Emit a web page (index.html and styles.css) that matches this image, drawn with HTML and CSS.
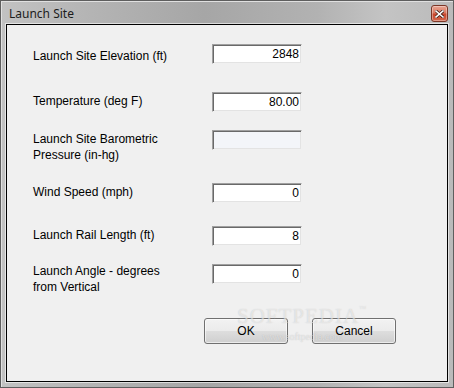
FILE: index.html
```html
<!DOCTYPE html>
<html lang="en">
<head>
    <meta charset="UTF-8">
    <title>Launch Site</title>
    <link rel="stylesheet" href="styles.css">
</head>
<body>
<div class="window">
    <div class="titlebar">
        <span class="title">Launch Site</span>
        <div class="close">
            <svg width="9" height="8" viewBox="0 0 9 8">
                <path d="M1 1 L8 7 M8 1 L1 7" stroke="#3a1a12" stroke-width="3" stroke-linecap="square"/>
                <path d="M1 1 L8 7 M8 1 L1 7" stroke="#fff" stroke-width="1.6" stroke-linecap="square"/>
            </svg>
        </div>
    </div>

    <div class="client">
        <div class="row row-1">
            <label class="label label-low">Launch Site Elevation (ft)</label>
            <input class="field" type="text" value="2848">
        </div>
        <div class="row row-2">
            <label class="label">Temperature (deg F)</label>
            <input class="field" type="text" value="80.00">
        </div>
        <div class="row row-3">
            <label class="label">Launch Site Barometric<br>Pressure (in-hg)</label>
            <input class="field" type="text" value="" disabled>
        </div>
        <div class="row row-4">
            <label class="label">Wind Speed (mph)</label>
            <input class="field" type="text" value="0">
        </div>
        <div class="row row-5">
            <label class="label">Launch Rail Length (ft)</label>
            <input class="field" type="text" value="8">
        </div>
        <div class="row row-6">
            <label class="label label-high">Launch Angle - degrees<br>from Vertical</label>
            <input class="field" type="text" value="0">
        </div>

        <div class="buttons">
            <button class="btn">OK</button>
            <button class="btn">Cancel</button>
        </div>

        <!-- watermark sitting over the buttons -->
        <div class="watermark">
            <div class="wm-big">SOFTPEDIA<sup>™</sup></div>
            <div class="wm-small">www.softpedia.com</div>
        </div>
    </div>
</div>
</body>
</html>
```

FILE: styles.css
```css
body {
    margin: 0;
    padding: 0;
    width: 454px;
    height: 388px;
    overflow: hidden;
    font-family: 'Liberation Sans', Arial, sans-serif;
}

.window {
    width: 454px;
    height: 388px;
    box-sizing: border-box;
    border: 1px solid #5e5e5e;
    padding: 0 5px 5px 5px;
    background: linear-gradient(to right, #c2c2c2 0%, #b4b4b4 20%, #a6a6a6 45%, #b2b2b2 70%, #c4c4c4 85%, #bababa 100%);
    box-shadow: inset 1px 1px 0 #e0e0e0;
    display: flex;
    flex-direction: column;
}

.titlebar {
    height: 23px;
    display: flex;
    justify-content: space-between;
    align-items: flex-start;
}

.title {
    font-family: 'Noto Sans', 'Open Sans', sans-serif;
    font-size: 12px;
    color: #1c1c1c;
    margin: 4px 0 0 3px;
}

.close {
    width: 17px;
    height: 17px;
    box-sizing: border-box;
    margin-top: 4px;
    margin-right: 0;
    border: 1px solid #7b3626;
    border-radius: 3px;
    background: linear-gradient(to bottom, #e9a593 0%, #d97a62 45%, #c8462b 55%, #d2674c 100%);
    box-shadow: inset 0 0 0 1px rgba(255, 255, 255, 0.35);
    display: flex;
    justify-content: center;
    align-items: center;
}

.client {
    position: relative;
    flex: 1;
    border: 1px solid #000;
    background-color: #f0f0f0;
    box-shadow: 0 0 0 1px rgba(255, 255, 255, 0.6);
    padding: 19px 0 0 26px;
}

.row {
    display: flex;
    align-items: flex-start;
}

.row-1 { height: 48px; }
.row-2 { height: 38px; }
.row-3 { height: 53px; }
.row-4 { height: 43px; }
.row-5 { height: 38px; }
.row-6 { height: 54px; }

.label {
    width: 179px;
    font-size: 12px;
    line-height: 16px;
    color: #000;
    padding-top: 1px;
}

.label-low {
    padding-top: 4px;
}

.label-high {
    padding-top: 0;
    margin-top: -1px;
}

.field {
    width: 90px;
    height: 20px;
    box-sizing: border-box;
    margin: 0;
    padding: 0 2px 0 2px;
    border: 1px solid;
    border-color: #a0a0a0 #f0f0f0 #f0f0f0 #a0a0a0;
    box-shadow: inset 1px 1px 0 #696969, inset -1px -1px 0 #e3e3e3;
    background-color: #fff;
    font-family: 'Liberation Sans', Arial, sans-serif;
    font-size: 12px;
    color: #000;
    text-align: right;
    outline: none;
}

.field:disabled {
    background-color: #f3f5f9;
}

.buttons {
    display: flex;
    gap: 24px;
    margin-left: 171px;
}

.btn {
    width: 84px;
    height: 26px;
    box-sizing: border-box;
    border: 1px solid #707070;
    border-radius: 3px;
    background: linear-gradient(to bottom, #f2f2f2 0%, #ebebeb 48%, #dddddd 52%, #cfcfcf 100%);
    box-shadow: inset 0 0 0 1px rgba(255, 255, 255, 0.6);
    font-family: 'Liberation Sans', Arial, sans-serif;
    font-size: 12px;
    color: #000;
    padding: 0;
}

.watermark {
    position: absolute;
    left: 230px;
    top: 279px;
    text-align: center;
    pointer-events: none;
}

.wm-big {
    font-family: 'Liberation Serif', serif;
    font-size: 21px;
    letter-spacing: 1px;
    color: rgba(255, 255, 255, 0.5);
    text-shadow: 0 0 1px rgba(120, 120, 120, 0.35);
}

.wm-big sup {
    font-size: 7px;
    vertical-align: 12px;
}

.wm-small {
    font-family: 'Liberation Serif', serif;
    font-size: 10px;
    margin-top: 2px;
    color: rgba(255, 255, 255, 0.5);
    text-shadow: 0 0 1px rgba(110, 110, 110, 0.4);
}
```
